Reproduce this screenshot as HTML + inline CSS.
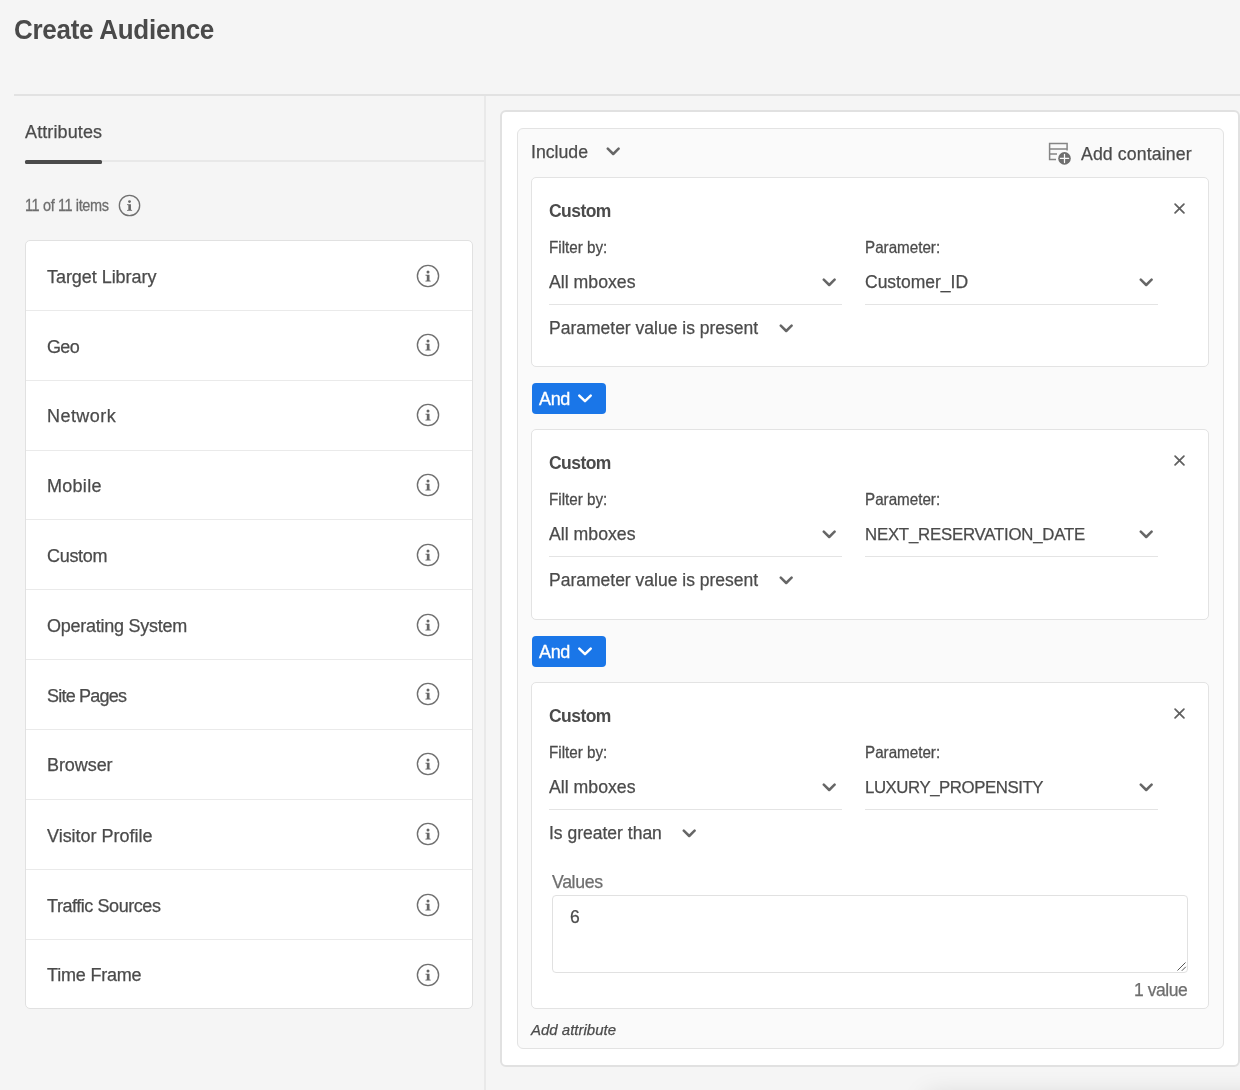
<!DOCTYPE html>
<html lang="en">
<head>
<meta charset="utf-8">
<title>Create Audience</title>
<style>
  html, body { margin: 0; padding: 0; }
  body {
    width: 1240px; height: 1090px; overflow: hidden; position: relative;
    background: #f5f5f5; color: #4b4b4b;
    font-family: "Liberation Sans", sans-serif; font-size: 17.6px;
  }
  .abs { position: absolute; }
  /* will-change forces grayscale text antialiasing like the reference */
  .t { position: absolute; line-height: 1; white-space: nowrap; margin: 0; font-weight: normal; will-change: transform; -webkit-text-stroke: 0.25px currentColor; }
  svg { position: absolute; display: block; overflow: visible; }

  /* page header */
  h1.t { left: 14px; top: 17.2px; font-size: 26px; font-weight: bold; letter-spacing: -0.28px; color: #4a4a4a; -webkit-text-stroke: 0; transform: scaleY(1.08); transform-origin: 0 84.65%; }
  .rule-top { left: 14px; right: 0; top: 94px; height: 2px; background: #e2e2e2; }
  .rule-vert { left: 484px; top: 96px; width: 2px; bottom: 0; background: #e9e9e9; }

  /* left panel */
  .tabline { left: 25px; width: 459px; top: 160px; height: 2px; background: #e8e8e8; }
  .tabsel { left: 25px; width: 77px; top: 160px; height: 3.6px; background: #4b4b4b; border-radius: 1.5px; }
  .tab { left: 25px; top: 122.6px; font-size: 18px; letter-spacing: 0.12px; }
  .count { left: 24.5px; top: 199.3px; font-size: 14.5px; letter-spacing: -0.38px; color: #6e6e6e; transform: scaleY(1.1); transform-origin: 0 84.65%; }

  .list { left: 25px; top: 240px; width: 446px; height: 767px; background: #fff;
          border: 1px solid #e1e1e1; border-radius: 5px; box-sizing: content-box; }
  .row { position: absolute; left: 0; right: 0; height: 69.8px; border-top: 1px solid #eaeaea; box-sizing: border-box; }
  .row:first-child { border-top-color: transparent; }
  .row .t { left: 21px; top: 26.6px; font-size: 18px; }
  .row svg { left: 389.5px; top: 22.4px; }

  /* right panel */
  .outer { left: 500px; top: 110px; width: 736px; height: 953px; background: #fff;
           border: 2px solid #e1e1e1; border-radius: 6px; }
  .inner { left: 516.5px; top: 127.5px; width: 705px; height: 919.5px; background: #fafafa;
           border: 1px solid #e3e3e3; border-radius: 6px; }
  .card { position: absolute; left: 531px; width: 675.5px; height: 188px; background: #fff;
          border: 1px solid #e3e3e3; border-radius: 5px; }
  .card .title { left: 17.3px; top: 25.3px; font-size: 17.5px; font-weight: bold; letter-spacing: -0.55px; -webkit-text-stroke: 0; }
  .card .lbl { top: 62.3px; font-size: 15.2px; transform: scaleY(1.07); transform-origin: 0 84.65%; }
  .card .val { top: 95.5px; font-size: 17.7px; }
  .card .op { left: 17.3px; top: 141.6px; font-size: 17.5px; }
  .card .ul { position: absolute; top: 125.5px; height: 1px; width: 292.5px; background: #e4e4e4; }
  .c1 { left: 17.3px; } .c2 { left: 333px; }
  .and { position: absolute; left: 532px; width: 74px; height: 31px; background: #1a76e8; border-radius: 4px; }
  .and .t { left: 7.2px; top: 6.6px; font-size: 18px; letter-spacing: -0.35px; color: #fff; -webkit-text-stroke: 0.35px #fff; }
</style>
</head>
<body>
<svg width="0" height="0" style="position:absolute">
  <defs>
    <symbol id="info" viewBox="0 0 24 24">
      <circle cx="12" cy="12" r="10.6" fill="none" stroke="#707070" stroke-width="1.4"/>
      <circle cx="12" cy="7.9" r="1.5" fill="#666"/>
      <path d="M9.4 10.7 H13.5 V16.4 L14.7 16.8 V17.6 H9.4 V16.8 L10.8 16.4 V11.8 L9.4 11.4 Z" fill="#666"/>
    </symbol>
    <symbol id="chev" viewBox="0 0 14 9">
      <path d="M1.8 1.7 L7.2 7 L12.6 1.7" fill="none" stroke="#666" stroke-width="2.5" stroke-linecap="round" stroke-linejoin="round"/>
    </symbol>
    <symbol id="chevw" viewBox="0 0 14 9">
      <path d="M1.3 1.6 L7 7.1 L12.7 1.6" fill="none" stroke="#ffffff" stroke-width="2.5" stroke-linecap="round" stroke-linejoin="round"/>
    </symbol>
    <symbol id="close" viewBox="0 0 12 12">
      <path d="M1.2 1.2 L10.8 10.8 M10.8 1.2 L1.2 10.8" fill="none" stroke="#606060" stroke-width="1.9" stroke-linecap="round"/>
    </symbol>
  </defs>
</svg>

<h1 class="t">Create Audience</h1>
<div class="abs rule-top"></div>
<div class="abs rule-vert"></div>

<!-- LEFT -->
<div class="t tab">Attributes</div>
<div class="abs tabline"></div>
<div class="abs tabsel"></div>
<div class="t count">11 of 11 items</div>
<svg style="left:118px;top:194px" width="23" height="23"><use href="#info"/></svg>

<div class="abs list">
  <div class="row" style="top:-0.90px"><span class="t" style="letter-spacing:-0.05px">Target Library</span><svg width="24" height="24"><use href="#info"/></svg></div>
  <div class="row" style="top:68.92px"><span class="t" style="letter-spacing:-0.65px">Geo</span><svg width="24" height="24"><use href="#info"/></svg></div>
  <div class="row" style="top:138.74px"><span class="t" style="letter-spacing:0.45px">Network</span><svg width="24" height="24"><use href="#info"/></svg></div>
  <div class="row" style="top:208.56px"><span class="t" style="letter-spacing:0.28px">Mobile</span><svg width="24" height="24"><use href="#info"/></svg></div>
  <div class="row" style="top:278.38px"><span class="t" style="letter-spacing:-0.3px">Custom</span><svg width="24" height="24"><use href="#info"/></svg></div>
  <div class="row" style="top:348.20px"><span class="t" style="letter-spacing:-0.26px">Operating System</span><svg width="24" height="24"><use href="#info"/></svg></div>
  <div class="row" style="top:418.02px"><span class="t" style="letter-spacing:-0.78px">Site Pages</span><svg width="24" height="24"><use href="#info"/></svg></div>
  <div class="row" style="top:487.84px"><span class="t" style="letter-spacing:-0.07px">Browser</span><svg width="24" height="24"><use href="#info"/></svg></div>
  <div class="row" style="top:557.66px"><span class="t" style="letter-spacing:-0.02px;top:27.3px">Visitor Profile</span><svg width="24" height="24"><use href="#info"/></svg></div>
  <div class="row" style="top:628.48px"><span class="t" style="letter-spacing:-0.44px">Traffic Sources</span><svg width="24" height="24"><use href="#info"/></svg></div>
  <div class="row" style="top:698.30px"><span class="t" style="letter-spacing:-0.19px;top:25.6px">Time Frame</span><svg width="24" height="24"><use href="#info"/></svg></div>
</div>

<!-- RIGHT -->
<div class="abs outer"></div>
<div class="abs inner"></div>

<div class="t" style="left:531px;top:143.7px;font-size:17.7px">Include</div>
<svg style="left:606px;top:147px" width="14" height="9"><use href="#chev"/></svg>

<div class="t" style="left:1081px;top:145.5px;font-size:17.7px;letter-spacing:0.12px">Add container</div>

<!-- add-container icon -->
<svg style="left:1048px;top:142px" width="24" height="24" viewBox="0 0 24 24">
  <path d="M8 17.5 H1.6 V1.5 H19.1 V8.4 M1.6 6.9 H19.1 M1.6 12 H9" fill="none" stroke="#858585" stroke-width="1.5"/>
  <circle cx="16.5" cy="16.4" r="6.3" fill="#6e6e6e"/>
  <path d="M16.5 12.3 V20.5 M12.4 16.4 H20.6" stroke="#fafafa" stroke-width="1.25" stroke-linecap="round" fill="none"/>
</svg>

<!-- card 1 -->
<div class="card" style="top:177px">
  <div class="t title">Custom</div>
  <svg style="left:642.2px;top:24.9px" width="11" height="11"><use href="#close"/></svg>
  <div class="t lbl c1">Filter by:</div>
  <div class="t val c1">All mboxes</div>
  <svg style="left:290.3px;top:100.2px" width="14" height="9"><use href="#chev"/></svg>
  <div class="ul c1"></div>
  <div class="t lbl c2">Parameter:</div>
  <div class="t val c2" style="font-size:17.5px">Customer_ID</div>
  <svg style="left:606.7px;top:100.2px" width="14" height="9"><use href="#chev"/></svg>
  <div class="ul c2"></div>
  <div class="t op">Parameter value is present</div>
  <svg style="left:246.7px;top:146px" width="14" height="9"><use href="#chev"/></svg>
</div>

<div class="and" style="top:383px"><span class="t">And</span><svg style="left:46.1px;top:10.8px" width="14" height="9"><use href="#chevw"/></svg></div>

<!-- card 2 -->
<div class="card" style="top:429px;height:189px">
  <div class="t title">Custom</div>
  <svg style="left:642.2px;top:24.9px" width="11" height="11"><use href="#close"/></svg>
  <div class="t lbl c1">Filter by:</div>
  <div class="t val c1">All mboxes</div>
  <svg style="left:290.3px;top:100.2px" width="14" height="9"><use href="#chev"/></svg>
  <div class="ul c1"></div>
  <div class="t lbl c2">Parameter:</div>
  <div class="t val c2" style="font-size:16.8px;letter-spacing:-0.21px;top:96.9px">NEXT_RESERVATION_DATE</div>
  <svg style="left:606.7px;top:100.2px" width="14" height="9"><use href="#chev"/></svg>
  <div class="ul c2"></div>
  <div class="t op">Parameter value is present</div>
  <svg style="left:246.7px;top:146px" width="14" height="9"><use href="#chev"/></svg>
</div>

<div class="and" style="top:636px"><span class="t">And</span><svg style="left:46.1px;top:10.8px" width="14" height="9"><use href="#chevw"/></svg></div>

<!-- card 3 -->
<div class="card" style="top:682px;height:324.5px">
  <div class="t title">Custom</div>
  <svg style="left:642.2px;top:24.9px" width="11" height="11"><use href="#close"/></svg>
  <div class="t lbl c1">Filter by:</div>
  <div class="t val c1">All mboxes</div>
  <svg style="left:290.3px;top:100.2px" width="14" height="9"><use href="#chev"/></svg>
  <div class="ul c1"></div>
  <div class="t lbl c2">Parameter:</div>
  <div class="t val c2" style="font-size:16.8px;letter-spacing:-0.43px;top:96.9px">LUXURY_PROPENSITY</div>
  <svg style="left:606.7px;top:100.2px" width="14" height="9"><use href="#chev"/></svg>
  <div class="ul c2"></div>
  <div class="t op">Is greater than</div>
  <svg style="left:150.3px;top:146px" width="14" height="9"><use href="#chev"/></svg>
  <div class="t" style="left:20.4px;top:190.9px;font-size:17.7px;letter-spacing:-0.35px;color:#6e6e6e">Values</div>
  <div class="abs ta" style="left:20.4px;top:212px;width:634px;height:75.5px;border:1px solid #e1e1e1;border-radius:4px;background:#fff">
    <div class="t" style="left:17px;top:12.5px;font-size:17.5px">6</div>
    <svg style="left:624px;top:66px" width="9" height="9" viewBox="0 0 9 9"><path d="M0.5 8.5 L8.5 0.5 M4.8 8.8 L8.8 4.8" stroke="#555" stroke-width="1" fill="none"/></svg>
  </div>
  <div class="t" style="right:19.8px;top:298.6px;font-size:17.5px;letter-spacing:-0.46px;color:#6e6e6e">1 value</div>
</div>

<div class="t" style="left:531px;top:1021.5px;font-size:15px;font-style:italic">Add attribute</div>

<div class="abs" style="left:926px;top:1095px;width:420px;height:60px;box-shadow:0 0 26px rgba(0,0,0,0.13)"></div>

</body>
</html>
